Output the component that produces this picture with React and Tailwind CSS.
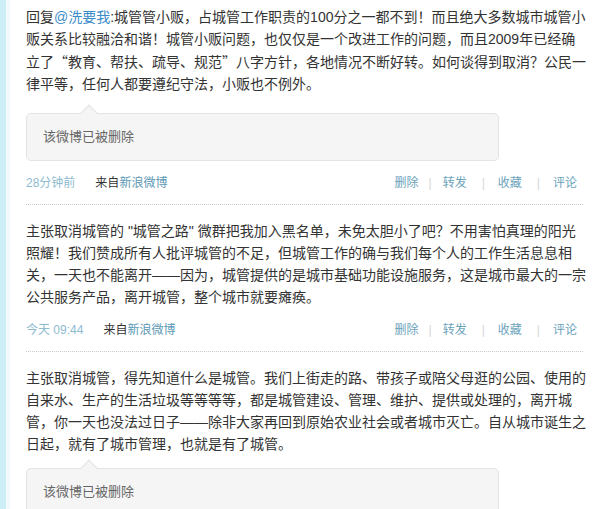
import React from "react";

const FONT = { fontFamily: '"Liberation Sans", "Noto Sans CJK SC", sans-serif' };

const Q = ({ children }) => (
  <span style={{ fontFamily: '"Noto Sans CJK SC", sans-serif' }}>{children}</span>
);

const posts = [
  {
    lines: [
      <>
        回复<a className="text-[#3b8cc9]">@洗要我</a>:城管管小贩，占城管工作职责的100分之一都不到！而且绝大多数城市城管小
      </>,
      "贩关系比较融洽和谐！城管小贩问题，也仅仅是一个改进工作的问题，而且2009年已经确",
      <>
        立了<Q>“</Q>教育、帮扶、疏导、规范<Q>”</Q>八字方针，各地情况不断好转。如何谈得到取消？公民一
      </>,
      "律平等，任何人都要遵纪守法，小贩也不例外。",
    ],
    deleted: true,
    time: "28分钟前",
  },
  {
    lines: [
      "主张取消城管的 \"城管之路\" 微群把我加入黑名单，未免太胆小了吧？不用害怕真理的阳光",
      "照耀！我们赞成所有人批评城管的不足，但城管工作的确与我们每个人的工作生活息息相",
      "关，一天也不能离开——因为，城管提供的是城市基础功能设施服务，这是城市最大的一宗",
      "公共服务产品，离开城管，整个城市就要瘫痪。",
    ],
    deleted: false,
    time: "今天 09:44",
  },
  {
    lines: [
      "主张取消城管，得先知道什么是城管。我们上街走的路、带孩子或陪父母逛的公园、使用的",
      "自来水、生产的生活垃圾等等等等，都是城管建设、管理、维护、提供或处理的，离开城",
      "管，你一天也没法过日子——除非大家再回到原始农业社会或者城市灭亡。自从城市诞生之",
      "日起，就有了城市管理，也就是有了城管。",
    ],
    deleted: true,
    time: "4分钟前",
  },
];

const DeletedBox = ({ tight }) => (
  <div
    className={`relative ${
      tight ? "mt-[13px]" : "mt-[18px]"
    } w-[473px] h-[48px] rounded-[5px] border border-[#e3e3e3] bg-[#f5f5f5] px-[16px] flex items-center`}
  >
    {/* little notch pointing up */}
    <div className="absolute top-[-7px] left-[56px] w-[12px] h-[12px] rotate-45 bg-[#f5f5f5] border-t border-l border-[#e3e3e3]" />
    <span className="relative text-[13px] text-[#666]">该微博已被删除</span>
  </div>
);

const Footer = ({ time }) => (
  <div className="flex items-center justify-between mt-[13px] pr-[6px] text-[12px] leading-[18px]">
    <div className="flex items-center">
      <a className="text-[#8dbbd0]">{time}</a>
      <span className="ml-[20px] text-[#333]">来自</span>
      <a className="text-[#5b98b5]">新浪微博</a>
    </div>
    <div className="flex items-center text-[#6ba3bb]">
      <a>删除</a>
      <span className="ml-[10px] mr-[11px] text-[#d5d5d5]">|</span>
      <a>转发</a>
      <span className="ml-[15px] mr-[13px] text-[#d5d5d5]">|</span>
      <a>收藏</a>
      <span className="ml-[15px] mr-[13px] text-[#d5d5d5]">|</span>
      <a>评论</a>
    </div>
  </div>
);

const Post = ({ post, first, last }) => (
  <div
    className={`${first ? "pt-[6px]" : "pt-[15px]"} pb-[12px] ${
      last ? "" : "border-b border-dotted border-[#c8c8c8]"
    }`}
  >
    <div className="text-[14px] leading-[22px] text-[#333] whitespace-nowrap">
      {post.lines.map((l, i) => (
        <div key={i}>{l}</div>
      ))}
    </div>
    {post.deleted && <DeletedBox tight={last} />}
    {!last && <Footer time={post.time} />}
  </div>
);

export default function App() {
  return (
    <div className="flex h-[509px] overflow-hidden bg-white" style={FONT}>
      <div className="w-[6px] bg-[#cdeef6]" />
      <div className="w-[4px] bg-[#f2fafc]" />
      <div className="w-[557px] ml-[16px]">
        {posts.map((p, i) => (
          <Post key={i} post={p} first={i === 0} last={i === posts.length - 1} />
        ))}
      </div>
    </div>
  );
}
